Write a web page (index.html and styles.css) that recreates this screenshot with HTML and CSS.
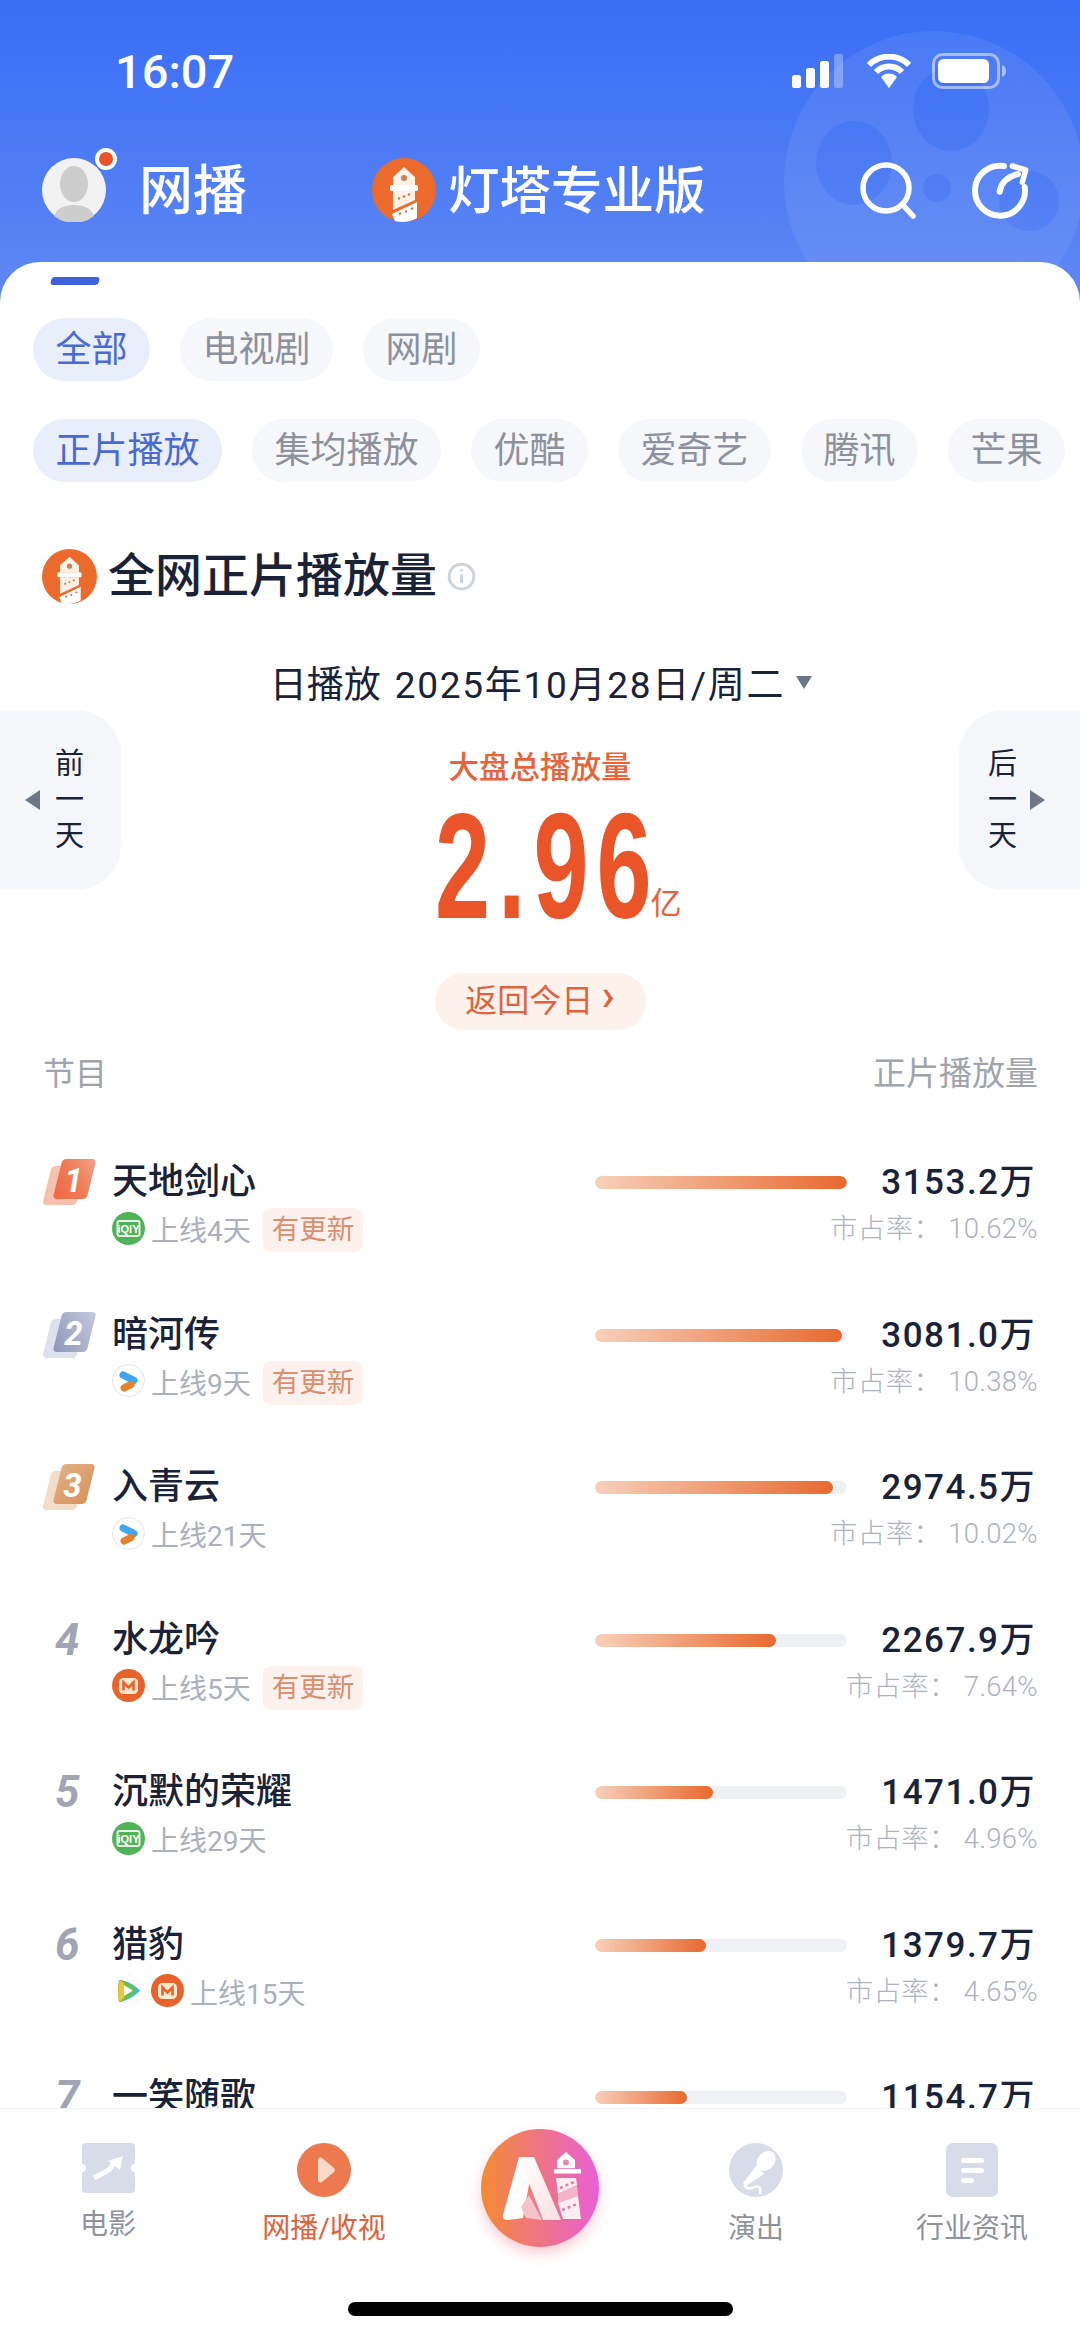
FILE: index.html
```html
<!DOCTYPE html>
<html lang="zh">
<head>
  <meta charset="utf-8">
  <title>灯塔专业版 - 网播</title>
  <link rel="stylesheet" href="styles.css">
</head>
<body>
  <svg class="defs" width="0" height="0">
    <defs>
      <linearGradient id="g-gold" x1="0" y1="0" x2="1" y2="1"><stop offset="0" stop-color="#e0b084"/><stop offset="1" stop-color="#d9925c"/></linearGradient>
      <linearGradient id="g-red" x1="1" y1="0" x2="0" y2="1"><stop offset="0" stop-color="#f0a48a"/><stop offset=".5" stop-color="#ee7a55"/><stop offset="1" stop-color="#ee6a45"/></linearGradient>
      <linearGradient id="g-silver" x1="1" y1="0" x2="0" y2="1"><stop offset="0" stop-color="#c4cade"/><stop offset="1" stop-color="#8e96b8"/></linearGradient>
      <linearGradient id="g-aileg" x1="0" y1="0" x2="1" y2="1"><stop offset="0" stop-color="#fff"/><stop offset="1" stop-color="#fbdfe4"/></linearGradient>
      <symbol id="lighthouse" viewBox="0 0 64 64">
        <circle cx="32" cy="32" r="32" fill="#ec6a2c"/>
        <path d="M32 9l11 10v8H21v-8z" fill="#fdf1e8"/>
        <circle cx="32" cy="20" r="3" fill="#c9825a"/>
        <rect x="18" y="27" width="28" height="6" rx="1.5" fill="#fff"/>
        <path d="M21 33h22v9L21 52z" fill="#fdf0e6"/>
        <path d="M20 56l25-12v16c-7 4-15 5-22 3z" fill="#fff"/>
        <path d="M26 41l2-1M31 39l2-1M36 37l2-1M27 56l2-1M33 54l2-1M39 51l2-1" stroke="#c9764a" stroke-width="2"/>
      </symbol>
      <symbol id="iqiyi" viewBox="0 0 33 33">
        <circle cx="16.5" cy="16.5" r="16.5" fill="#4fb457"/>
        <rect x="5.5" y="9" width="22" height="15" rx="2" fill="none" stroke="#e8f6e8" stroke-width="2"/>
        <text x="16.5" y="20.500" class="iq-text">iQIY</text>
      </symbol>
      <symbol id="youku" viewBox="0 0 33 33">
        <circle cx="16.5" cy="16.5" r="16" fill="#fff" stroke="#e4e4e4"/>
        <path d="M11 11l11 5.500" stroke="#3fa5ee" stroke-width="7" stroke-linecap="round"/>
        <path d="M12 24l7-3.500" stroke="#e5812c" stroke-width="7" stroke-linecap="round"/>
      </symbol>
      <symbol id="mango" viewBox="0 0 33 33">
        <circle cx="16.5" cy="16.5" r="16.5" fill="#e8622a"/>
        <rect x="7" y="9" width="19" height="16" rx="4.500" fill="#fde9d0"/>
        <path d="M11.500 21.500v-8l5 5 5-5v8" fill="none" stroke="#e8622a" stroke-width="2.600"/>
      </symbol>
      <symbol id="tencent" viewBox="0 0 33 33">
        <circle cx="16.5" cy="16.5" r="16.5" fill="#fbfbfb"/>
        <path d="M7 6c8 1 16 5 21 10.500C23 22 15 27 7 28c-1-7-1-15 0-22z" fill="#3fb4e6"/>
        <path d="M7 6c8 1 14 5 17 10.500C20 22 15 26 7 28c-1-7-1-15 0-22z" fill="#66c148"/>
        <path d="M7 6c-1 7-1 15 0 22l5-4V9z" fill="#f2c230"/>
        <path d="M12 11l9 5.500-9 5.500z" fill="#fff"/>
      </symbol>
    </defs>
  </svg>

  <div class="phone">
    <header class="top">
      <svg class="reel" width="320" height="320" viewBox="0 0 320 320">
        <path fill="#fff" fill-opacity=".07" fill-rule="evenodd" d="M160 10a150 150 0 1 0 0 300a150 150 0 1 0 0-300zM177 46a38 42 0 1 1 0 84a38 42 0 1 1 0-84zM80 100a38 42 0 1 1 0 84a38 42 0 1 1 0-84zM163 153a14 14 0 1 1 0 28a14 14 0 1 1 0-28zM255 150a30 30 0 1 1 0 60a30 30 0 1 1 0-60z"/>
      </svg>

      <div class="status">
        <span class="time">16:07</span>
        <div class="status-icons">
          <svg width="54" height="34" viewBox="0 0 54 34">
            <rect x="0" y="21" width="9" height="13" rx="2.500" fill="#fff"/>
            <rect x="14" y="14" width="9" height="20" rx="2.500" fill="#fff"/>
            <rect x="28" y="7" width="9" height="27" rx="2.500" fill="#fff"/>
            <rect x="42" y="0" width="9" height="34" rx="2.500" fill="#fff" fill-opacity=".3"/>
          </svg>
          <svg width="46" height="34" viewBox="0 0 46 34">
            <path d="M3 11a28 28 0 0 1 40 0M10 18a18 18 0 0 1 26 0" fill="none" stroke="#fff" stroke-width="6"/>
            <path d="M15 23a11 11 0 0 1 16 0L23 34z" fill="#fff"/>
          </svg>
          <svg width="74" height="36" viewBox="0 0 74 36">
            <rect x="1.500" y="1.500" width="65" height="33" rx="9" fill="none" stroke="#fff" stroke-opacity=".5" stroke-width="3"/>
            <rect x="6" y="6" width="51" height="24" rx="5.500" fill="#fff"/>
            <path d="M70 12c3 1 4 3 4 6s-1 5-4 6z" fill="#fff" fill-opacity=".5"/>
          </svg>
        </div>
      </div>

      <nav class="topnav">
        <div class="avatar">
          <svg width="64" height="64" viewBox="0 0 64 64">
            <circle cx="32" cy="32" r="32" fill="#f2f2f2"/>
            <ellipse cx="32" cy="26" rx="14" ry="18" fill="#cdcdcd"/>
            <path d="M12 58c3-9 13-11 20-11s17 2 20 11a32 32 0 0 1-40 0z" fill="#cdcdcd"/>
          </svg>
          <span class="avatar-dot"></span>
        </div>
        <span class="page-name">网播</span>
        <svg class="logo" width="64" height="64"><use href="#lighthouse"/></svg>
        <span class="brand">灯塔专业版</span>
        <svg class="nav-icon nav-search" width="58" height="58" viewBox="0 0 58 58">
          <circle cx="26" cy="26" r="23" fill="none" stroke="#fff" stroke-width="5.500"/>
          <path d="M43 43l10 11" stroke="#fff" stroke-width="5.500" stroke-linecap="round"/>
        </svg>
        <svg class="nav-icon nav-share" width="60" height="60" viewBox="0 0 60 60">
          <path d="M33 5A25 25 0 1 0 53.700 26" fill="none" stroke="#fff" stroke-width="6" stroke-linecap="round"/>
          <path d="M28.700 30.700C30 22 36 16 47 13" fill="none" stroke="#fff" stroke-width="6" stroke-linecap="round"/>
          <path d="M41.300 5l13.400 4-3.400 12.300" fill="none" stroke="#fff" stroke-width="5.500" stroke-linecap="round" stroke-linejoin="round"/>
        </svg>
      </nav>
    </header>

    <main class="card">
      <div class="tab-mark"></div>

      <div class="chips">
        <span class="chip active">全部</span>
        <span class="chip">电视剧</span>
        <span class="chip">网剧</span>
      </div>
      <div class="chips chips-second">
        <span class="chip active">正片播放</span>
        <span class="chip">集均播放</span>
        <span class="chip">优酷</span>
        <span class="chip">爱奇艺</span>
        <span class="chip">腾讯</span>
        <span class="chip">芒果</span>
      </div>

      <div class="section-title">
        <svg width="55" height="55"><use href="#lighthouse"/></svg>
        <h2>全网正片播放量</h2>
        <svg class="info-icon" width="20" height="20" viewBox="0 0 20 20">
          <circle cx="10" cy="10" r="8.500" fill="none" stroke="#cdd3dc" stroke-width="2"/>
          <path d="M10 8.500v6M10 5v1.500" stroke="#cdd3dc" stroke-width="2"/>
        </svg>
      </div>

      <div class="date-line">
        <span>日播放</span>
        <span class="date-value">2025年10月28日/周二</span>
        <i class="caret"></i>
      </div>

      <section class="hero">
        <div class="day-btn day-prev">
          <i class="arrow arrow-left"></i>
          <span class="day-text">前<br>一<br>天</span>
        </div>
        <div class="total">
          <div class="total-label">大盘总播放量</div>
          <div class="total-value"><span class="total-num">2.96</span><span class="total-unit">亿</span></div>
          <div class="today-pill">返回今日<b class="pill-chevron">›</b></div>
        </div>
        <div class="day-btn day-next">
          <span class="day-text">后<br>一<br>天</span>
          <i class="arrow arrow-right"></i>
        </div>
      </section>

      <div class="table-head">
        <span>节目</span>
        <span class="head-right">正片播放量</span>
      </div>

      <div class="row">
        <div class="rank">
          <svg width="53" height="46" viewBox="0 0 52 46">
            <rect x="5" y="7" width="34" height="39" rx="4" transform="skewX(-14) translate(5 0)" fill="#f6c2ae"/>
            <rect x="14" y="0" width="34" height="40" rx="4" transform="skewX(-14) translate(5 0)" fill="url(#g-red)"/>
            <text x="30" y="33" class="rank-text">1</text>
          </svg>
        </div>
        <div class="name">天地剑心</div>
        <div class="bar"><div class="fill" style="width:100%"></div></div>
        <div class="value">3153.2万</div>
        <div class="sub">
          <svg width="33" height="33"><use href="#iqiyi"/></svg>
          <span>上线4天</span>
          <em class="badge">有更新</em>
        </div>
        <div class="share">市占率： 10.62%</div>
      </div>

      <div class="row">
        <div class="rank">
          <svg width="53" height="46" viewBox="0 0 52 46">
            <rect x="5" y="7" width="34" height="39" rx="4" transform="skewX(-14) translate(5 0)" fill="#dde1ee"/>
            <rect x="14" y="0" width="34" height="40" rx="4" transform="skewX(-14) translate(5 0)" fill="url(#g-silver)"/>
            <text x="30" y="33" class="rank-text">2</text>
          </svg>
        </div>
        <div class="name">暗河传</div>
        <div class="bar"><div class="fill" style="width:98%"></div></div>
        <div class="value">3081.0万</div>
        <div class="sub">
          <svg width="33" height="33"><use href="#youku"/></svg>
          <span>上线9天</span>
          <em class="badge">有更新</em>
        </div>
        <div class="share">市占率： 10.38%</div>
      </div>

      <div class="row">
        <div class="rank">
          <svg width="53" height="46" viewBox="0 0 52 46">
            <rect x="5" y="7" width="34" height="39" rx="4" transform="skewX(-14) translate(5 0)" fill="#f3dcc8"/>
            <rect x="14" y="0" width="33" height="40" rx="4" transform="skewX(-14) translate(5 0)" fill="url(#g-gold)"/>
            <text x="29" y="33" class="rank-text">3</text>
          </svg>
        </div>
        <div class="name">入青云</div>
        <div class="bar"><div class="fill" style="width:94.5%"></div></div>
        <div class="value">2974.5万</div>
        <div class="sub">
          <svg width="33" height="33"><use href="#youku"/></svg>
          <span>上线21天</span>
        </div>
        <div class="share">市占率： 10.02%</div>
      </div>

      <div class="row">
        <div class="rank rank-plain">4</div>
        <div class="name">水龙吟</div>
        <div class="bar"><div class="fill" style="width:72%"></div></div>
        <div class="value">2267.9万</div>
        <div class="sub">
          <svg width="33" height="33"><use href="#mango"/></svg>
          <span>上线5天</span>
          <em class="badge">有更新</em>
        </div>
        <div class="share">市占率： 7.64%</div>
      </div>

      <div class="row">
        <div class="rank rank-plain">5</div>
        <div class="name">沉默的荣耀</div>
        <div class="bar"><div class="fill" style="width:46.7%"></div></div>
        <div class="value">1471.0万</div>
        <div class="sub">
          <svg width="33" height="33"><use href="#iqiyi"/></svg>
          <span>上线29天</span>
        </div>
        <div class="share">市占率： 4.96%</div>
      </div>

      <div class="row">
        <div class="rank rank-plain">6</div>
        <div class="name">猎豹</div>
        <div class="bar"><div class="fill" style="width:44%"></div></div>
        <div class="value">1379.7万</div>
        <div class="sub">
          <svg width="33" height="33"><use href="#tencent"/></svg>
          <svg width="33" height="33"><use href="#mango"/></svg>
          <span>上线15天</span>
        </div>
        <div class="share">市占率： 4.65%</div>
      </div>

      <div class="row">
        <div class="rank rank-plain">7</div>
        <div class="name">一笑随歌</div>
        <div class="bar"><div class="fill" style="width:36.6%"></div></div>
        <div class="value">1154.7万</div>
      </div>
    </main>

    <footer class="tabbar">
      <div class="tab">
        <svg width="55" height="50" viewBox="0 0 55 50">
          <path d="M5 0h45a4 4 0 0 1 4 4v17a4 4 0 0 0 0 8v17a4 4 0 0 1-4 4H5a4 4 0 0 1-4-4V29a4 4 0 0 0 0-8V4a4 4 0 0 1 4-4z" fill="#d8dce8"/>
          <path d="M13 35l15-8 7-10" fill="none" stroke="#fff" stroke-width="5"/>
          <path d="M27 18l15-5-3 14z" fill="#fff"/>
        </svg>
        <span>电影</span>
      </div>
      <div class="tab tab-on">
        <svg width="54" height="54" viewBox="0 0 54 54">
          <circle cx="27" cy="27" r="27" fill="#ec7a4e"/>
          <path d="M21 17c0-2 2-3 4-2l12 10c1 1 1 3 0 4L25 39c-2 1-4 0-4-2z" fill="#fbd9c8"/>
        </svg>
        <span>网播/收视</span>
      </div>
      <div class="tab tab-center">
        <div class="ai-btn">
          <svg width="118" height="118" viewBox="0 0 118 118">
            <path d="M22 86l16-58h15L42 89l-15 2c-4 0-6-2-5-5z" fill="#fff"/>
            <path d="M38 28h15l27 63H62z" fill="url(#g-aileg)"/>
            <path d="M48 66l13 25-16-2-5-11z" fill="#f5c2cb"/>
            <path d="M85 23l9 8v8.300H76V31z" fill="#fff"/>
            <circle cx="85" cy="33.500" r="3" fill="#e88aa8"/>
            <rect x="73" y="40" width="27" height="4.500" rx="1" fill="#fff"/>
            <path d="M75 49h20l1 7-19 9z" fill="#fdeef2"/>
            <path d="M77 65l19-9 1 11-20 7z" fill="#f3b5c8"/>
            <path d="M77 74l20-7 3 23H82z" fill="#fdeef2"/>
            <path d="M79 59l14-6M81 81l15-6" stroke="#e779a8" stroke-width="2.500" stroke-dasharray="3 3"/>
          </svg>
        </div>
      </div>
      <div class="tab">
        <svg width="54" height="54" viewBox="0 0 54 54">
          <circle cx="27" cy="27" r="27" fill="#d8dce8"/>
          <ellipse cx="37" cy="18" rx="8.500" ry="11" transform="rotate(40 37 18)" fill="#fff"/>
          <path d="M27 23l8 8-18 12-3-3z" fill="#fff"/>
          <path d="M15 42c5 8 12-1 15 2s1 5 1 7" fill="none" stroke="#fff" stroke-width="2.500"/>
        </svg>
        <span>演出</span>
      </div>
      <div class="tab">
        <svg width="54" height="54" viewBox="0 0 54 54">
          <rect x="1" y="0" width="52" height="54" rx="7" fill="#d8dce8"/>
          <rect x="16" y="15" width="23" height="5" rx="2.500" fill="#fff"/>
          <rect x="16" y="25" width="23" height="5" rx="2.500" fill="#fff"/>
          <rect x="16" y="35" width="13" height="5" rx="2.500" fill="#fff"/>
        </svg>
        <span>行业资讯</span>
      </div>
      <div class="home-bar"></div>
    </footer>
  </div>
</body>
</html>
```
FILE: styles.css
```css
* {
  box-sizing: border-box;
}

html, body {
  margin: 0;
  padding: 0;
}

body {
  width: 1080px;
  height: 2338px;
  overflow: hidden;
  background: #fff;
  font-family: Roboto, "Noto Sans CJK SC", sans-serif;
  color: #1a2238;
}

.defs {
  position: absolute;
}

.iq-text {
  font: 700 11px "Liberation Sans", sans-serif;
  text-anchor: middle;
  fill: #fff;
}

.rank-text {
  font: italic 700 33px Roboto, sans-serif;
  text-anchor: middle;
  fill: #fff;
}

.phone {
  position: relative;
  width: 1080px;
  height: 2338px;
  overflow: hidden;
}

/* header */
.top {
  position: relative;
  height: 302px;
  overflow: hidden;
  background: linear-gradient(180deg, #386df6 0%, #5f88f3 100%);
  color: #fff;
}

.reel {
  position: absolute;
  left: 774px;
  top: 21px;
}

.status {
  position: relative;
  height: 158px;
  padding: 47px 74px 0 115px;
  display: flex;
  justify-content: space-between;
  align-items: flex-start;
}

.time {
  font-size: 47px;
  line-height: 50px;
  font-weight: 500;
}

.status-icons {
  display: flex;
  align-items: center;
  gap: 20px;
  padding-top: 6px;
}

.topnav {
  position: relative;
  display: flex;
  align-items: center;
  height: 64px;
  padding-left: 42px;
}

.avatar {
  position: relative;
  width: 64px;
  height: 64px;
}

.avatar svg {
  display: block;
}

.avatar-dot {
  position: absolute;
  left: 53px;
  top: -10px;
  width: 22px;
  height: 22px;
  border-radius: 50%;
  background: #ea5327;
  border: 4px solid #fff;
}

.page-name {
  margin-left: 33px;
  padding-top: 4px;
  font-size: 54px;
  font-weight: 500;
  line-height: 64px;
}

.logo {
  margin-left: 125px;
}

.brand {
  margin-left: 12px;
  padding-top: 4px;
  font-size: 51.5px;
  font-weight: 500;
  line-height: 64px;
}

.nav-icon {
  margin-top: 2px;
}

.nav-search {
  margin-left: 154px;
}

.nav-share {
  margin-left: 53px;
}

/* main card */
.card {
  position: relative;
  margin-top: -40px;
  background: #fff;
  border-radius: 40px 40px 0 0;
}

.tab-mark {
  width: 48px;
  height: 8px;
  margin-left: 51px;
  position: relative;
  top: 15px;
  background: #3f62dc;
  border-radius: 3px;
  transform: skewX(-14deg);
}

.chips {
  display: flex;
  gap: 30px;
  padding: 48px 0 0 33px;
}

.chips-second {
  padding-top: 38px;
}

.chip {
  height: 63px;
  padding: 0 22.5px;
  border-radius: 32px;
  background: #f6f7fb;
  color: #8d919d;
  font-size: 36px;
  line-height: 64px;
  white-space: nowrap;
}

.chip.active {
  background: #e9eefb;
  color: #4a69d2;
}

.section-title {
  display: flex;
  align-items: center;
  height: 56px;
  margin-top: 66px;
  padding-left: 42px;
}

.section-title h2 {
  margin: 0 0 0 11px;
  font-size: 47px;
  line-height: 56px;
  font-weight: 500;
}

.info-icon {
  width: 29px;
  height: 29px;
  margin: 0 0 0 10px;
}

.date-line {
  display: flex;
  justify-content: center;
  align-items: center;
  gap: 14px;
  height: 50px;
  margin-top: 53px;
  margin-bottom: 3px;
  padding-left: 2px;
  font-size: 37px;
}

.date-value {
  letter-spacing: 1.7px;
}

.caret {
  width: 0;
  height: 0;
  margin-left: -3px;
  border-left: 8px solid transparent;
  border-right: 8px solid transparent;
  border-top: 13px solid #6c7684;
}

.hero {
  display: flex;
  align-items: flex-start;
  justify-content: space-between;
}

.day-btn {
  display: flex;
  align-items: center;
  width: 121px;
  height: 180px;
  background: #f5f6fa;
}

.day-prev {
  border-radius: 0 45px 45px 0;
  padding-left: 25px;
  gap: 15px;
}

.day-next {
  border-radius: 45px 0 0 45px;
  padding-left: 29px;
  gap: 13px;
}

.day-text {
  font-size: 29px;
  line-height: 36px;
  color: #1a2238;
}

.arrow {
  width: 0;
  height: 0;
  border-top: 10px solid transparent;
  border-bottom: 10px solid transparent;
}

.arrow-left {
  border-right: 15px solid #6c7684;
}

.arrow-right {
  border-left: 15px solid #6c7684;
}

.total {
  display: flex;
  flex-direction: column;
  align-items: center;
  padding-top: 40px;
}

.total-label {
  font-size: 30.5px;
  line-height: 36px;
  font-weight: 500;
  color: #e8623a;
}

.total-value {
  position: relative;
  width: 211px;
  height: 108px;
  margin-top: 26px;
}

.total-num {
  display: block;
  width: 340px;
  font-family: "Liberation Sans", Arial, sans-serif;
  font-size: 150px;
  font-weight: 700;
  letter-spacing: 12px;
  line-height: 108px;
  color: #ea5429;
  transform: scaleX(.66);
  transform-origin: 0 50%;
}

.total-unit {
  position: absolute;
  left: 216px;
  bottom: -4px;
  font-size: 31px;
  line-height: 40px;
  color: #ea5f38;
}

.today-pill {
  display: flex;
  align-items: center;
  justify-content: center;
  gap: 8px;
  width: 211px;
  height: 57px;
  margin-top: 53px;
  padding-bottom: 7px;
  border-radius: 29px;
  background: #fdf1ec;
  color: #e0623c;
  font-size: 32px;
}

.pill-chevron {
  font-size: 44px;
  line-height: 50px;
  margin-top: -6px;
  font-weight: 500;
}

.table-head {
  display: flex;
  justify-content: space-between;
  align-items: center;
  height: 40px;
  margin-top: 21px;
  padding: 0 42px 0 43px;
  color: #a0a4ad;
  font-size: 32px;
}

.head-right {
  font-size: 33px;
}

/* list */
.row {
  display: grid;
  grid-template-columns: 70px 483px 252px 1fr;
  grid-template-rows: 44px 50px;
  height: 152.5px;
  padding: 0 42px 0 42px;
}

.table-head + .row {
  margin-top: 69px;
}

.rank {
  display: flex;
  align-items: center;
  color: #a1a5b3;
}

.rank svg {
  display: block;
  margin-left: 1px;
}

.rank-plain {
  padding-left: 13px;
  font-size: 44px;
  font-style: italic;
  font-weight: 700;
}

.name {
  font-size: 36px;
  line-height: 44px;
  font-weight: 500;
  white-space: nowrap;
}

.bar {
  align-self: center;
  height: 13px;
  margin-top: 1px;
  border-radius: 7px;
  background: #eef0f4;
  overflow: hidden;
}

.fill {
  height: 100%;
  border-radius: 7px;
  background: linear-gradient(90deg, #f7d0ba 0%, #e8692f 100%);
}

.value {
  font-size: 35px;
  line-height: 46px;
  font-weight: 500;
  letter-spacing: 1.5px;
  text-align: right;
  padding-right: 2px;
  white-space: nowrap;
}

.sub {
  grid-column: 2;
  display: flex;
  align-items: center;
  gap: 6px;
  color: #aab0bc;
  font-size: 28px;
}

.sub svg {
  flex: none;
  display: block;
  margin-top: -2px;
}

.badge {
  height: 44px;
  margin: 2px 0 0 6px;
  padding: 0 9px;
  border-radius: 8px;
  background: #fdf1ee;
  color: #d98f6e;
  font-style: normal;
  font-size: 27.5px;
  line-height: 43px;
}

.share {
  grid-column: 3 / 5;
  align-self: center;
  color: #adb2bf;
  font-size: 27.5px;
  line-height: 44px;
  font-weight: 300;
  letter-spacing: .3px;
  text-align: right;
  white-space: pre;
}

/* bottom bar */
.tabbar {
  position: absolute;
  left: 0;
  right: 0;
  top: 2108px;
  bottom: 0;
  display: grid;
  grid-template-columns: repeat(5, 216px);
  align-items: start;
  background: #fff;
  border-top: 1px solid #f2f3f5;
}

.tab {
  display: flex;
  flex-direction: column;
  align-items: center;
  padding-top: 34px;
  color: #8e929d;
  font-size: 28px;
  line-height: 36px;
}

.tab span {
  margin-top: 14px;
}

.tab-on {
  color: #e0623c;
}

.tab-center {
  padding-top: 20px;
}

.ai-btn {
  width: 118px;
  height: 118px;
  border-radius: 50%;
  background: linear-gradient(90deg, #f48a32 0%, #e95fd6 100%);
  box-shadow: 0 6px 14px rgba(240, 110, 130, .35);
}

.ai-btn svg {
  display: block;
}

.home-bar {
  position: absolute;
  left: 348px;
  top: 193px;
  width: 385px;
  height: 14px;
  border-radius: 7px;
  background: #000;
}
```
